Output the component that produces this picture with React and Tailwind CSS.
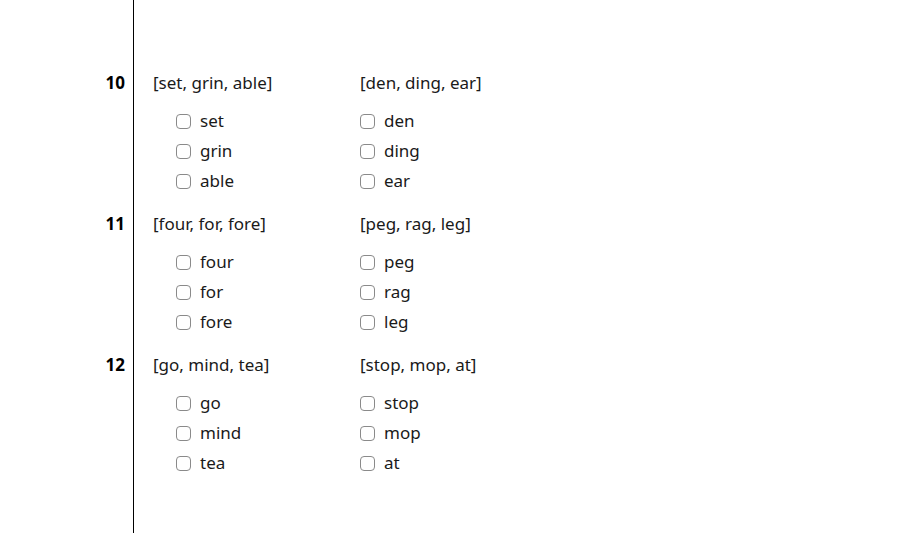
const groups = [
  {
    num: 10,
    cols: [
      { title: '[set, grin, able]', items: ['set', 'grin', 'able'] },
      { title: '[den, ding, ear]', items: ['den', 'ding', 'ear'] },
    ],
  },
  {
    num: 11,
    cols: [
      { title: '[four, for, fore]', items: ['four', 'for', 'fore'] },
      { title: '[peg, rag, leg]', items: ['peg', 'rag', 'leg'] },
    ],
  },
  {
    num: 12,
    cols: [
      { title: '[go, mind, tea]', items: ['go', 'mind', 'tea'] },
      { title: '[stop, mop, at]', items: ['stop', 'mop', 'at'] },
    ],
  },
];

const Box = () => (
  <span className="w-[15px] h-[15px] shrink-0 rounded-[4px] border border-[#8a8a8a] bg-white" />
);

const Column = ({ col, indent }) => (
  <div className={indent ? 'w-[207px]' : ''}>
    <div className="h-6 leading-6 text-[17px]">{col.title}</div>
    <div className={`mt-[11px] flex flex-col ${indent ? 'pl-[23px]' : 'pl-0'}`}>
      {col.items.map((item) => (
        <label key={item} className="h-[30px] flex items-center gap-[9px] text-[17px]">
          <Box />
          <span>{item}</span>
        </label>
      ))}
    </div>
  </div>
);

export default function App() {
  return (
    <div
      className="h-[533px] w-full bg-white text-[#1a1a1a] flex flex-col"
      style={{ fontFamily: '"Noto Sans", "Open Sans", sans-serif' }}
    >
      <div className="flex h-[71px]">
        <div className="w-[134px] shrink-0 border-r border-black" />
      </div>
      {groups.map((g) => (
        <div key={g.num} className="flex">
          <div className="w-[134px] shrink-0 border-r border-black pr-[8px] text-right">
            <div className="h-6 leading-6 font-bold text-[17px] text-black">{g.num}</div>
          </div>
          <div className="pl-[19px] pb-[16px] flex">
            <Column col={g.cols[0]} indent />
            <Column col={g.cols[1]} />
          </div>
        </div>
      ))}
      <div className="flex flex-1">
        <div className="w-[134px] shrink-0 border-r border-black" />
      </div>
    </div>
  );
}
